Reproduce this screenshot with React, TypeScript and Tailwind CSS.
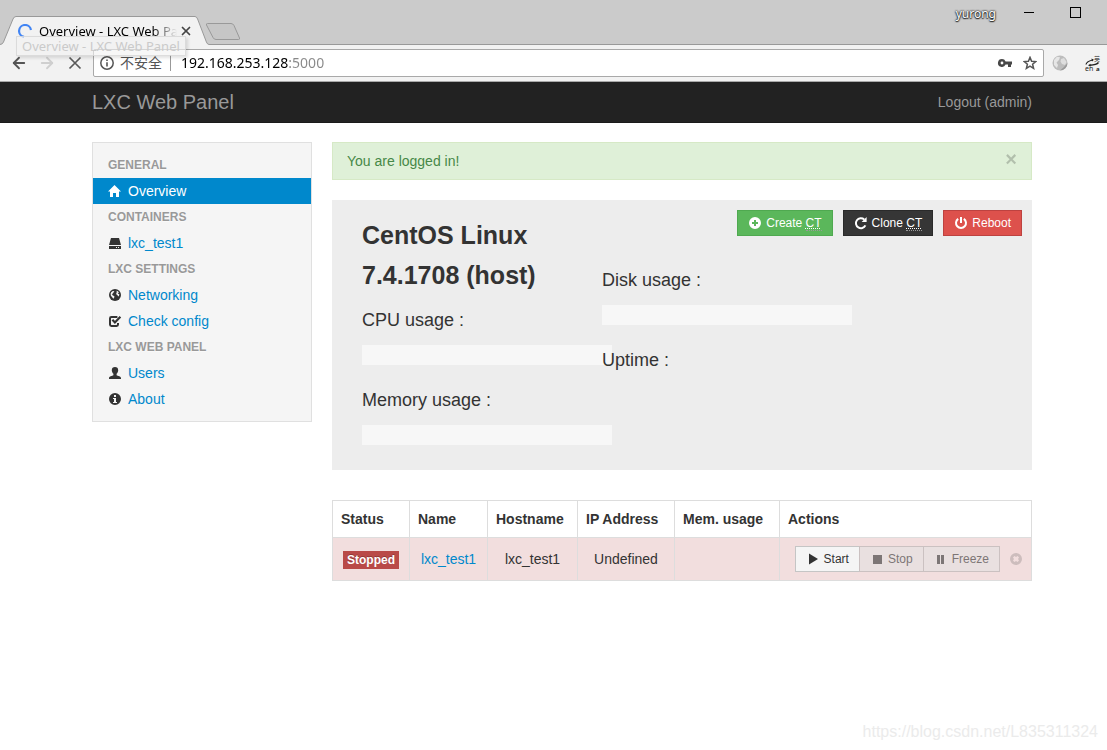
import type { ReactNode } from "react";
import { ArrowLeft, ArrowRight, X } from "lucide-react";

type IconProps = { className?: string };

function Glyph({ className = "", children }: { className?: string; children: ReactNode }) {
  return (
    <svg viewBox="0 0 14 14" fill="currentColor" className={`w-3.5 h-3.5 shrink-0 ${className}`} aria-hidden="true">
      {children}
    </svg>
  );
}

const HomeIcon = ({ className }: IconProps) => (
  <Glyph className={className}>
    <path d="M6.5 1 0 7.5H2V13H5V9H8V13H11V7.5H13Z" />
  </Glyph>
);

const HddIcon = ({ className }: IconProps) => (
  <Glyph className={className}>
    <path d="M3 2H11L13 9H1Z" />
    <path fillRule="evenodd" d="M1 10H13V13H1ZM8 11V12H9V11ZM10 11V12H11V11Z" />
  </Glyph>
);

const GlobeIcon = ({ className }: IconProps) => (
  <Glyph className={className}>
    <circle cx="7" cy="7" r="6" />
    <path
      fill="#f5f5f5"
      d="M3.2 4.2 4.8 3 6.4 3.2 5.6 4.4 4.8 5 4.6 6.2 3.6 6.6 5 7.6 6.4 8.2 6.2 9.4 5.4 10.8 4.4 9.4 2.9 7.8 2.6 5.8ZM8.2 2.8 9.8 3.2 11.2 4.8 9.6 4.8 10.2 5.8 11.4 6.2 10.8 8.2 10 8.2 9.4 7 8.2 6.2 8.4 4.8 9 4Z"
    />
  </Glyph>
);

const CheckIcon = ({ className }: IconProps) => (
  <Glyph className={className}>
    <path
      fill="none"
      stroke="currentColor"
      strokeWidth="2"
      d="M9.4 3H3.4Q2 3 2 4.4V10.6Q2 12 3.4 12H8.6Q10 12 10 10.6V9"
    />
    <path fill="none" stroke="currentColor" strokeWidth="2.2" d="M4.4 5.8 6.9 8.4 12.4 2.8" />
  </Glyph>
);

const UserIcon = ({ className }: IconProps) => (
  <Glyph className={className}>
    <path d="M7 1C9 1 10.2 2.2 10.2 4.2 10.2 5.8 9.4 7 8.6 7.8V9.2C9.8 10 13 10.2 13 12V13H1V12C1 10.2 4.2 10 5.4 9.2V7.8C4.6 7 3.8 5.8 3.8 4.2 3.8 2.2 5 1 7 1Z" />
  </Glyph>
);

const InfoIcon = ({ className }: IconProps) => (
  <Glyph className={className}>
    <path
      fillRule="evenodd"
      d="M7 1A6 6 0 1 0 7 13 6 6 0 1 0 7 1ZM6 3H8V5H6ZM5 6H8V10H9V11H5V10H6V7H5Z"
    />
  </Glyph>
);

const PlusIcon = ({ className }: IconProps) => (
  <Glyph className={className}>
    <path
      fillRule="evenodd"
      d="M7 1A6 6 0 1 0 7 13 6 6 0 1 0 7 1ZM6 4H8V6H10V8H8V10H6V8H4V6H6Z"
    />
  </Glyph>
);

const RepeatIcon = ({ className }: IconProps) => (
  <Glyph className={className}>
    <path fill="none" stroke="currentColor" strokeWidth="2" d="M10.2 3.4A5 5 0 1 0 11.4 9.4" />
    <path d="M12.6 1V6H7.6Z" />
  </Glyph>
);

const PowerIcon = ({ className }: IconProps) => (
  <Glyph className={className}>
    <path fill="none" stroke="currentColor" strokeWidth="2" d="M4.2 2.8A5 5 0 1 0 9.8 2.8" />
    <path d="M6 1H8V7H6Z" />
  </Glyph>
);

const PlayIcon = ({ className }: IconProps) => (
  <Glyph className={className}>
    <path d="M3 1.5 12 7 3 12.5Z" />
  </Glyph>
);

const StopIcon = ({ className }: IconProps) => (
  <Glyph className={className}>
    <path d="M3 3H12V12H3Z" />
  </Glyph>
);

const PauseIcon = ({ className }: IconProps) => (
  <Glyph className={className}>
    <path d="M3 3H6V12H3ZM7 3H10V12H7Z" />
  </Glyph>
);

const RemoveIcon = ({ className }: IconProps) => (
  <Glyph className={className}>
    <path
      fillRule="evenodd"
      d="M7 1A6 6 0 1 0 7 13 6 6 0 1 0 7 1ZM5.4 4 7 5 8.6 4 10 5.4 9 7 10 8.6 8.6 10 7 9 5.4 10 4 8.6 5 7 4 5.4Z"
    />
  </Glyph>
);

const menu = [
  { header: "GENERAL", items: [{ label: "Overview", Icon: HomeIcon, active: true }] },
  { header: "CONTAINERS", items: [{ label: "lxc_test1", Icon: HddIcon, active: false }] },
  {
    header: "LXC SETTINGS",
    items: [
      { label: "Networking", Icon: GlobeIcon, active: false },
      { label: "Check config", Icon: CheckIcon, active: false },
    ],
  },
  {
    header: "LXC WEB PANEL",
    items: [
      { label: "Users", Icon: UserIcon, active: false },
      { label: "About", Icon: InfoIcon, active: false },
    ],
  },
];

function BrowserChrome() {
  return (
    <header className="font-['Noto_Sans','Noto_Sans_CJK_SC',sans-serif]">
      {/* Tab strip */}
      <div className="relative flex items-end h-[45px] bg-[#cbcbcb]">
        <svg viewBox="0 0 16 29" className="w-4 h-[29px] shrink-0" aria-hidden="true">
          <path d="M0 29V28.5Q2.5 28.5 3.5 26L13 3Q14 0.5 16 0.5V29Z" fill="#f2f2f2" />
          <path d="M0 28.5Q2.5 28.5 3.5 26L13 3Q14 0.5 16 0.5" fill="none" stroke="#999" />
        </svg>
        <div className="flex items-center w-[179px] h-[29px] border-t border-[#999] bg-[#f2f2f2] pl-[2px] pr-[2px]">
          <svg viewBox="0 0 14 14" className="w-3.5 h-3.5 shrink-0" aria-hidden="true">
            <path d="M6 12.9A6 6 0 1 1 13 6" fill="none" stroke="#4285f4" strokeWidth="2.2" />
          </svg>
          <span className="flex-1 min-w-0 ml-[7px] overflow-hidden whitespace-nowrap text-[13px] leading-5 text-black [mask-image:linear-gradient(to_right,black_82%,transparent)]">
            Overview - LXC Web Panel
          </span>
          <button type="button" aria-label="Close tab" className="ml-0.5 text-[#444]">
            <X className="w-3.5 h-3.5" strokeWidth={3} />
          </button>
        </div>
        <svg viewBox="0 0 14 29" className="w-3.5 h-[29px] shrink-0" aria-hidden="true">
          <path d="M0 29V0.5Q1.6 0.5 2.6 3L11.4 26Q12.4 28.5 14 28.5V29Z" fill="#f2f2f2" />
          <path d="M0 0.5Q1.6 0.5 2.6 3L11.4 26Q12.4 28.5 14 28.5" fill="none" stroke="#999" />
        </svg>
        <div className="flex flex-1 items-start justify-between self-stretch border-b border-[#999]">
          <button type="button" aria-label="New tab" className="mt-[22px] -ml-1">
            <svg viewBox="0 0 36 19" className="w-9 h-[19px]" aria-hidden="true">
              <path
                d="M2.5 1.5H26Q28 1.5 29 3.5L34.5 16Q35 17.5 33.5 17.5H11Q9 17.5 8 15.5L1.5 3Q1 1.5 2.5 1.5Z"
                fill="#c6c6c6"
                stroke="#999"
              />
            </svg>
          </button>
          <div className="flex items-center h-7 pr-[26px]">
            <span className="mr-7 text-xs leading-5 text-white [text-shadow:0_0_2px_#000,0_0_2px_#333,0_1px_1px_#333]">
              yurong
            </span>
            <button type="button" aria-label="Minimize" className="w-2.5 mb-1 border-t border-black" />
            <button type="button" aria-label="Maximize" className="w-[11px] h-[11px] mb-1 ml-9 border border-black" />
          </div>
        </div>
        <div
          role="tooltip"
          className="absolute left-4 top-9 z-10 px-[5px] border border-[#d2d2d2]/70 bg-[#f2f2f2]/60 text-[13px] leading-[18px] text-[#cacaca] whitespace-nowrap shadow-[2px_2px_3px_rgba(0,0,0,0.12)]"
        >
          Overview - LXC Web Panel
        </div>
      </div>

      {/* Toolbar */}
      <div className="flex items-center h-[37px] pl-2.5 pr-[6px] border-b border-[#a9a9a9] bg-[#f2f2f2]">
        <button type="button" aria-label="Back" className="text-[#555]">
          <ArrowLeft className="w-[18px] h-[18px]" strokeWidth={2.4} />
        </button>
        <button type="button" aria-label="Forward" className="ml-2.5 text-[#cfcfcf]">
          <ArrowRight className="w-[18px] h-[18px]" strokeWidth={2.4} />
        </button>
        <button type="button" aria-label="Stop loading" className="ml-2.5 text-[#5a5a5a]">
          <svg viewBox="0 0 18 18" className="w-[18px] h-[18px]" aria-hidden="true">
            <path d="M3.5 3.5 14.5 14.5M14.5 3.5 3.5 14.5" stroke="currentColor" strokeWidth="1.7" />
          </svg>
        </button>
        <div className="flex flex-1 items-center h-7 ml-[9px] px-1.5 border border-[#a9a9a9] rounded-[2px] bg-white">
          <svg viewBox="0 0 14 14" className="w-3.5 h-3.5 shrink-0" aria-hidden="true">
            <circle cx="7" cy="7" r="6.2" fill="none" stroke="#555" strokeWidth="1.5" />
            <path d="M6.2 3.4H7.8V5H6.2ZM6.2 6.2H7.8V10.6H6.2Z" fill="#555" />
          </svg>
          <label htmlFor="address" className="ml-1.5 pr-2 border-r border-[#999] text-sm leading-4 text-[#555]">
            不安全
          </label>
          <input
            id="address"
            type="text"
            defaultValue="192.168.253.128:5000"
            className="flex-1 min-w-0 ml-2.5 text-sm leading-5 bg-[linear-gradient(to_right,#000_107px,#888_107px)] bg-clip-text text-transparent outline-none"
          />
          <button type="button" aria-label="Saved passwords" className="text-[#484848]">
            <svg viewBox="0 0 16 14" className="w-4 h-3.5" aria-hidden="true">
              <path
                fill="currentColor"
                fillRule="evenodd"
                d="M5 3A4 4 0 1 0 8.6 8.6H11V11H14V8.6H15V5.4H8.6A4 4 0 0 0 5 3ZM5 5.6A1.4 1.4 0 1 1 5 8.4 1.4 1.4 0 1 1 5 5.6Z"
              />
            </svg>
          </button>
          <button type="button" aria-label="Bookmark" className="ml-2.5 text-[#555]">
            <svg viewBox="0 0 14 14" className="w-3.5 h-3.5" aria-hidden="true">
              <path
                fill="none"
                stroke="currentColor"
                strokeWidth="1.5"
                d="M7 1.4 8.6 5.3 12.8 5.6 9.6 8.3 10.6 12.4 7 10.2 3.4 12.4 4.4 8.3 1.2 5.6 5.4 5.3Z"
              />
            </svg>
          </button>
        </div>
        <button type="button" aria-label="Web extension" className="ml-2">
          <svg viewBox="0 0 16 16" className="w-4 h-4" aria-hidden="true">
            <circle cx="8" cy="8" r="7.5" fill="#bdbdbd" />
            <path d="M2 5 5 1.8 8 2.2 7 5 4.5 7.5 6 10 5 13 2 10Z" fill="#e6e6e6" />
            <path d="M9 4 12 3 14.5 7 13 10 10 9 8.5 6.5Z" fill="#dedede" />
            <path d="M8 15.5A7.5 7.5 0 0 0 15.5 8L12 12Z" fill="#999" />
          </svg>
        </button>
        <button type="button" aria-label="Translate" className="ml-4">
          <svg viewBox="0 0 17 17" className="w-[17px] h-[17px]" aria-hidden="true">
            <path d="M2 9.5Q2.5 6.5 8.5 5" fill="none" stroke="#222" strokeWidth="1.2" />
            <path d="M14.5 7.5Q12.5 9.8 6 10.2" fill="none" stroke="#222" strokeWidth="1.5" />
            <path d="M7.5 3.6 10 4.8 8 6.4ZM6.5 8.8 4 10.2 6.5 11.8Z" fill="#222" />
            <text x="10" y="6" fontSize="6" fill="#333">
              英
            </text>
            <text x="1" y="16" fontSize="7" fill="#222">
              en
            </text>
            <text x="12" y="16" fontSize="6" fontWeight="700" fill="#222">
              a
            </text>
          </svg>
        </button>
      </div>
    </header>
  );
}

function Usage({ label }: { label: string }) {
  return (
    <div className="mb-[25px]">
      <h4 className="text-lg leading-5">{label}</h4>
      <div className="w-[250px] h-5 mt-[15px] bg-[#f7f7f7]" />
    </div>
  );
}

function CtLabel() {
  return (
    <abbr title="Container" className="border-b border-dotted border-[#999]">
      CT
    </abbr>
  );
}

const actionButton = "flex items-center gap-1 px-2.5 py-0.5 border text-xs leading-5";

export default function App() {
  return (
    <div className="flex flex-col min-h-screen bg-white font-['Liberation_Sans',Arial,sans-serif] text-sm leading-5 text-[#333]">
      <BrowserChrome />

      <nav className="flex items-center justify-between h-[41px] pl-[92px] pr-[75px] bg-[#222] text-[#999] border-b border-[#1a1a1a]">
        <a href="#" className="text-xl leading-5">
          LXC Web Panel
        </a>
        <a href="#">Logout (admin)</a>
      </nav>

      <div className="flex items-start gap-5 pt-[19px] pl-[92px] pr-[75px]">
        {/* Sidebar */}
        <aside className="w-[220px] shrink-0 py-[9px] border border-[#e0e0e0] bg-[#f5f5f5]">
          {menu.map((group) => (
            <section key={group.header}>
              <h5 className="px-[15px] text-xs leading-[26px] font-bold text-[#999] [text-shadow:0_1px_0_rgba(255,255,255,0.5)]">
                {group.header}
              </h5>
              {group.items.map(({ label, Icon, active }) => (
                <a
                  key={label}
                  href="#"
                  className={`flex items-center gap-1.5 px-[15px] leading-[26px] ${
                    active ? "bg-[#0088cc] text-white" : "text-[#0088cc]"
                  }`}
                >
                  <Icon className={active ? "text-white" : "text-[#333]"} />
                  {label}
                </a>
              ))}
            </section>
          ))}
        </aside>

        <main className="flex-1 min-w-0">
          <div className="flex items-start justify-between px-3.5 py-2 border border-[#d6e9c6] bg-[#dff0d8] text-[#468847]">
            You are logged in!
            <button type="button" aria-label="Dismiss" className="text-xl leading-4 font-bold text-black opacity-20">
              ×
            </button>
          </div>

          {/* Host panel */}
          <div className="flex items-start mt-5 pl-[30px] bg-[#ededed]">
            <div className="w-[220px] shrink-0 pt-[15px]">
              <h3 className="mb-[15px] text-[25px] leading-10 font-bold">CentOS Linux 7.4.1708 (host)</h3>
              <Usage label="CPU usage :" />
              <Usage label="Memory usage :" />
            </div>
            <div className="relative flex-1 min-w-0 ml-5 pt-2.5">
              <div className="flex justify-end gap-2.5 pr-2.5 mb-[34px]">
                <button type="button" className={`${actionButton} border-[#4fa950] bg-[#5bb75b] text-white`}>
                  <PlusIcon />
                  <span>
                    Create <CtLabel />
                  </span>
                </button>
                <button type="button" className={`${actionButton} border-[#2a2a2a] bg-[#363636] text-white`}>
                  <RepeatIcon />
                  <span>
                    Clone <CtLabel />
                  </span>
                </button>
                <button type="button" className={`${actionButton} border-[#bd4240] bg-[#dd514c] text-white`}>
                  <PowerIcon />
                  Reboot
                </button>
              </div>
              <Usage label="Disk usage :" />
              <h4 className="text-lg leading-5">Uptime :</h4>
            </div>
          </div>

          {/* Containers */}
          <table className="w-full mt-[30px] table-fixed border-collapse [&_th]:border [&_td]:border [&_th]:border-[#ddd] [&_td]:border-[#ddd]">
            <thead>
              <tr className="text-left [&>th]:p-2">
                <th className="w-[77px]">Status</th>
                <th className="w-[78px]">Name</th>
                <th className="w-[90px]">Hostname</th>
                <th className="w-[97px]">IP Address</th>
                <th className="w-[105px]">Mem. usage</th>
                <th>Actions</th>
              </tr>
            </thead>
            <tbody>
              <tr className="bg-[#f2dede] text-center [&>td]:py-2">
                <td>
                  <span className="inline-block px-1 bg-[#b94a48] text-xs leading-[18px] font-bold text-white [text-shadow:0_-1px_0_rgba(0,0,0,0.25)]">
                    Stopped
                  </span>
                </td>
                <td>
                  <a href="#" className="text-[#0088cc]">
                    lxc_test1
                  </a>
                </td>
                <td>lxc_test1</td>
                <td>Undefined</td>
                <td />
                <td>
                  <div className="flex items-center justify-end pr-2">
                    <button type="button" className={`${actionButton} border-[#c5c5c5] bg-[#f5f5f5]`}>
                      <PlayIcon />
                      Start
                    </button>
                    <button
                      type="button"
                      disabled
                      className={`${actionButton} -ml-px border-[#cbc1c1] bg-[#e9e0e0] text-[#7d7676]`}
                    >
                      <StopIcon />
                      Stop
                    </button>
                    <button
                      type="button"
                      disabled
                      className={`${actionButton} -ml-px border-[#cbc1c1] bg-[#e9e0e0] text-[#7d7676]`}
                    >
                      <PauseIcon />
                      Freeze
                    </button>
                    <button type="button" aria-label="Destroy" className="ml-[9px] text-[#cdbdbd]">
                      <RemoveIcon />
                    </button>
                  </div>
                </td>
              </tr>
            </tbody>
          </table>
        </main>
      </div>

      <footer className="mt-auto pr-[9px] pb-2 text-right text-base leading-5 text-[#ebebeb]">
        https://blog.csdn.net/L835311324
      </footer>
    </div>
  );
}
